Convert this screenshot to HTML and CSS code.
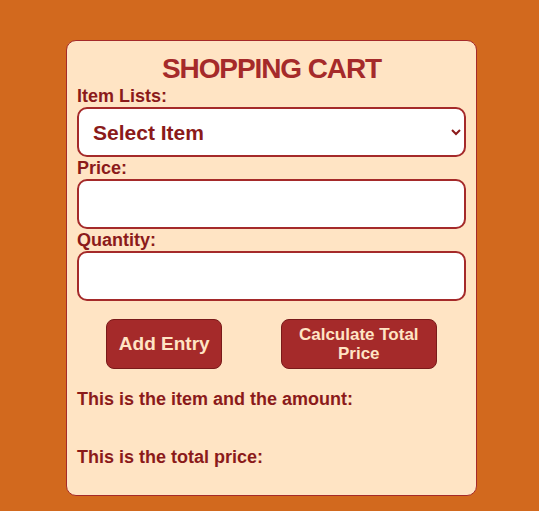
FILE: index.html
```html
<!DOCTYPE html>
<html>
<head>
<meta charset="utf-8">
<link rel="stylesheet" href="styles.css">
</head>
<body>
<div class="card">
  <h1 class="title">SHOPPING CART</h1>
  <label class="label">Item Lists:</label>
  <select class="field select">
    <option>Select Item</option>
  </select>
  <label class="label">Price:</label>
  <input class="field" type="text">
  <label class="label">Quantity:</label>
  <input class="field" type="text">
  <div class="buttons">
    <button class="btn btn-add">Add Entry</button>
    <button class="btn btn-calc">Calculate Total<br>Price</button>
  </div>
  <p class="out out-items">This is the item and the amount:</p>
  <p class="out out-total">This is the total price:</p>
</div>
</body>
</html>
```
FILE: styles.css
```css
html, body {
  margin: 0;
  padding: 0;
}
body {
  background: #d2691e;
  font-family: "Liberation Sans", Arial, sans-serif;
  font-weight: bold;
  padding-top: 40px;
}
.card {
  width: 389px;
  margin: 0 0 0 66px;
  padding: 12px 10px 28px 10px;
  background: #ffe4c4;
  border: 1px solid #a52a2a;
  border-radius: 10px;
  display: flex;
  flex-direction: column;
}
.title {
  margin: 0;
  text-align: center;
  color: #a52a2a;
  font-size: 28px;
  line-height: 32px;
  letter-spacing: -1.1px;
  font-weight: bold;
}
.label {
  color: #8b1a1a;
  font-size: 18px;
  line-height: 21px;
  margin-top: 1px;
}
.field {
  box-sizing: border-box;
  height: 50px;
  width: 389px;
  border: 2px solid #a52a2a;
  border-radius: 10px;
  background: #fff;
  font-family: inherit;
  font-weight: bold;
  margin: 0;
}
.select {
  font-size: 21px;
  color: #8b1a1a;
  padding: 0 10px;
}
.buttons {
  display: flex;
  justify-content: space-around;
  margin-top: 18px;
}
.btn {
  height: 50px;
  background: #a52a2a;
  color: #ffe4c4;
  border: 1px solid #7a1a1a;
  border-radius: 8px;
  font-family: inherit;
  font-weight: bold;
  padding: 0;
}
.btn-add {
  width: 116px;
  font-size: 19px;
}
.btn-calc {
  width: 156px;
  font-size: 17px;
  line-height: 19px;
}
.out {
  margin: 0;
  color: #8b1a1a;
  font-size: 18px;
  line-height: 20px;
}
.out-items {
  margin-top: 20px;
}
.out-total {
  margin-top: 38px;
}
```
